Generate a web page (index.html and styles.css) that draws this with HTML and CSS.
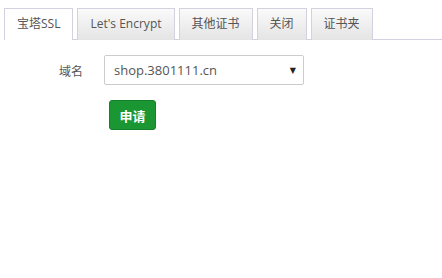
FILE: index.html
```html
<!DOCTYPE html>
<html lang="zh-CN">
<head>
<meta charset="utf-8">
<title>SSL</title>
<link rel="stylesheet" href="styles.css">
</head>
<body>
<div class="page">
  <div class="tabs">
    <div class="tab active">宝塔SSL</div>
    <div class="tab">Let's Encrypt</div>
    <div class="tab">其他证书</div>
    <div class="tab">关闭</div>
    <div class="tab">证书夹</div>
  </div>
  <div class="form">
    <div class="row">
      <span class="label">域名</span>
      <div class="select">
        <span class="value">shop.3801111.cn</span>
        <span class="arrow">▼</span>
      </div>
    </div>
    <div class="actions">
      <button class="btn" type="button">申请</button>
    </div>
  </div>
</div>
</body>
</html>
```
FILE: styles.css
```css
html, body {
  margin: 0;
  padding: 0;
  background: #fff;
}
body {
  font-family: "Open Sans", "Noto Sans CJK SC", sans-serif;
  color: #555;
}
.page {
  padding: 8px 0 0 4px;
}
.tabs {
  display: flex;
  gap: 4px;
  border-bottom: 1px solid #d3d1e0;
  height: 31px;
}
.tab {
  box-sizing: border-box;
  height: 32px;
  padding: 0 12px;
  border: 1px solid #d3d1e0;
  border-bottom: none;
  background: linear-gradient(#fafafa, #e4e4e4);
  font-size: 12px;
  line-height: 30px;
  color: #555;
  white-space: nowrap;
}
.tab.active {
  background: #fff;
}
.form {
  padding-top: 15px;
}
.row {
  display: flex;
  align-items: center;
}
.label {
  width: 79px;
  text-align: right;
  font-size: 12px;
  color: #555;
  margin-right: 21px;
  font-family: "Noto Sans CJK SC", sans-serif;
}
.select {
  box-sizing: border-box;
  width: 200px;
  height: 30px;
  border: 1px solid #ccc;
  border-radius: 2px;
  display: flex;
  align-items: center;
  justify-content: space-between;
  padding: 0 7px 0 9px;
  font-size: 13px;
  color: #555;
}
.arrow {
  font-size: 8px;
  color: #222;
  font-family: "DejaVu Sans", sans-serif;
}
.actions {
  padding: 15px 0 0 105px;
}
.btn {
  box-sizing: border-box;
  height: 30px;
  width: 47px;
  padding: 0;
  border: 1px solid #157f29;
  border-radius: 3px;
  background: #1a9632;
  color: #fff;
  font-size: 13px;
  font-weight: bold;
  font-family: "Noto Sans CJK SC", sans-serif;
}
```
